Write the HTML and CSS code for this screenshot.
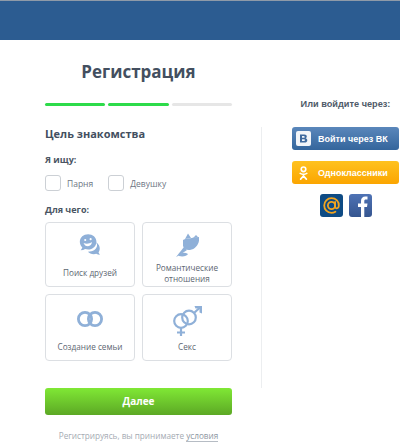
FILE: index.html
```html
<!DOCTYPE html>
<html lang="ru">
<head>
    <meta charset="UTF-8">
    <title>Регистрация</title>
    <link rel="stylesheet" href="styles.css">
</head>
<body>
    <div class="header"></div>
    <div class="content">
        <div class="main">
            <h1 class="title">Регистрация</h1>
            <div class="steps">
                <div class="step done"></div>
                <div class="step done"></div>
                <div class="step"></div>
            </div>
            <h2 class="subtitle">Цель знакомства</h2>
            <div class="label">Я ищу:</div>
            <div class="checks">
                <div class="check"><span class="box"></span>Парня</div>
                <div class="check"><span class="box"></span>Девушку</div>
            </div>
            <div class="label label-goal">Для чего:</div>
            <div class="cards">
                <div class="card">
                    <svg class="card-icon" width="22" height="24" viewBox="0 0 26.500 28">
                        <path fill="#8fb0d8" d="M19 10c3 1 6 4 6 8 0 2-.5 3.500-1.500 4.800.3 1.200 1 2.200 1.800 3-1.800 0-3.300-.4-4.500-1.300-1 .4-2 .6-3 .6-3 0-5.500-1.200-7-3 6 0 11-3 11-8 0-1.600-.9-3-2.800-4.100z"/>
                        <path fill="#8fb0d8" d="M11 1c5.500 0 10 3.800 10 9s-4.500 9.500-10 9.500c-1.300 0-2.500-.2-3.600-.6-1.500 1-3.300 1.500-5.400 1.500 1-1 1.700-2.200 2-3.600C2 15 1 12.700 1 10c0-5.200 4.500-9 10-9z"/>
                        <circle fill="#fff" cx="7.500" cy="8" r="1.300"/>
                        <circle fill="#fff" cx="14" cy="7" r="1.300"/>
                        <path fill="#fff" d="M5.500 11.500c3 1.500 7 1.200 10-1 0 3-2 5-4.700 5-2.500 0-4.500-1.700-5.300-4z"/>
                    </svg>
                    <div class="card-text">Поиск друзей</div>
                </div>
                <div class="card">
                    <svg class="card-icon" width="23" height="24" viewBox="0 0 23 24">
                        <path fill="#8fb0d8" d="M7 7C11 5 18 5 23 4 24 10 20 16 14 17 11 17.500 8 16 7 13z"/>
                        <path fill="#8fb0d8" d="M9 6l3-5.500L15 5zM17 5l3-3 2.500 2.500z"/>
                        <path fill="#8fb0d8" d="M8 14l3 3-8 5.500L0 24z"/>
                        <path fill="#8fb0d8" d="M3 22c2-2.500 6-3 9-1-1 2-5 3-9 2z"/>
                    </svg>
                    <div class="card-text card-text-two">Романтические отношения</div>
                </div>
                <div class="card card-rings">
                    <svg class="card-icon" width="26" height="16" viewBox="0 0 26 16">
                        <circle cx="8" cy="8" r="6.600" fill="none" stroke="#8fb0d8" stroke-width="2.800"/>
                        <circle cx="18" cy="8" r="6.600" fill="none" stroke="#8fb0d8" stroke-width="2.800"/>
                    </svg>
                    <div class="card-text">Создание семьи</div>
                </div>
                <div class="card card-sex">
                    <svg class="card-icon" width="30" height="31" viewBox="0 0 30 31">
                        <g fill="none" stroke="#8fb0d8" stroke-width="2.200">
                            <circle cx="9" cy="15" r="6.800"/>
                            <circle cx="17" cy="11.500" r="6.800"/>
                            <path d="M9 22v8M5 26.500h8M22 7l6-5.500"/>
                        </g>
                        <path fill="#8fb0d8" d="M22.500 0H30v7.500l-2.500-1V2.500h-4z"/>
                    </svg>
                    <div class="card-text">Секс</div>
                </div>
            </div>
            <div class="next">Далее</div>
            <div class="terms">Регистрируясь, вы принимаете <a class="terms-link">условия</a></div>
        </div>
        <div class="divider"></div>
        <div class="side">
            <div class="side-title">Или войдите через:</div>
            <div class="social vk">
                <svg class="social-icon vk-icon" width="15" height="15" viewBox="0 0 15 15">
                    <rect width="15" height="15" rx="2" fill="#f2f5f9"/>
                    <path fill="#3f6a9e" fill-rule="evenodd" d="M4 3.500h4.300c1.600 0 2.500.8 2.500 1.900 0 .9-.5 1.500-1.200 1.800 1 .2 1.700 1 1.700 2 0 1.400-1.100 2.300-2.800 2.300H4zM6 5v1.800h1.700c.6 0 1-.3 1-.9S8.300 5 7.700 5zM6 8.200V10h2c.6 0 1-.3 1-.9s-.4-.9-1-.9z"/>
                </svg>
                <span>Войти через ВК</span>
            </div>
            <div class="social ok">
                <svg class="social-icon ok-icon" width="9" height="14" viewBox="0 0 11 17">
                    <circle cx="5.500" cy="4" r="2.800" fill="none" stroke="#fff" stroke-width="2"/>
                    <path fill="none" stroke="#fff" stroke-width="2" stroke-linecap="round" d="M1.500 9c2.500 1.500 5.500 1.500 8 0M5.500 10.500v1.500M2 16l3.500-3.800L9 16"/>
                </svg>
                <span>Одноклассники</span>
            </div>
            <div class="small-icons">
                <div class="small-icon mail">
                    <svg width="23" height="23" viewBox="0 0 23 23">
                        <circle cx="11.500" cy="11.500" r="3.600" fill="none" stroke="#f0a420" stroke-width="1.800"/>
                        <path fill="none" stroke="#f0a420" stroke-width="1.800" stroke-linecap="round" d="M15.100 8v4.500c0 2.500 3.400 2.500 3.700-.5.500-4.500-3-7.800-7.300-7.800-4.100 0-7.300 3.200-7.300 7.300s3.200 7.300 7.300 7.300c1.500 0 2.800-.4 3.900-1.100"/>
                    </svg>
                </div>
                <div class="small-icon fb">
                    <svg width="23" height="23" viewBox="0 0 23 23">
                        <path fill="#fff" d="M12 23V13H9V9.500h3V7c0-3 1.800-4.500 4.300-4.500 1.100 0 2 .1 2.200.1v3h-1.600c-1.300 0-1.600.7-1.600 1.600v2.300h3.200l-.5 3.500h-2.700v10z"/>
                    </svg>
                </div>
            </div>
        </div>
    </div>
</body>
</html>
```

FILE: styles.css
```css
body {
    margin: 0;
    background-color: #fff;
    font-family: "Open Sans", sans-serif;
    color: #4a5563;
    overflow: hidden;
}
.header {
    height: 40px;
    box-sizing: border-box;
    border-top: 1px solid #8f9aa8;
    background-color: #2c5c91;
}
.content {
    display: flex;
    align-items: flex-start;
}
.main {
    width: 187px;
    margin-left: 45px;
}
.title {
    margin: 20px 0 0;
    font-size: 17px;
    line-height: 24px;
    text-align: center;
    color: #434f5f;
}
.steps {
    display: flex;
    gap: 3px;
    margin-top: 19px;
}
.step {
    flex: 1;
    height: 3px;
    border-radius: 2px;
    background-color: #e6e6e6;
}
.step.done {
    background-color: #2ddb4a;
}
.subtitle {
    margin: 19px 0 0;
    font-size: 11px;
    line-height: 18px;
    color: #434f5f;
}
.label {
    margin-top: 10px;
    font-size: 9px;
    font-weight: bold;
    line-height: 14px;
}
.label-goal {
    margin-top: 12px;
}
.checks {
    display: flex;
    gap: 15px;
    margin-top: 8px;
}
.check {
    display: flex;
    align-items: center;
    gap: 6px;
    font-size: 8.500px;
    color: #6d7683;
}
.box {
    width: 14px;
    height: 14px;
    border: 1px solid #ccd0d5;
    border-radius: 3px;
}
.cards {
    display: grid;
    grid-template-columns: 90px 90px;
    grid-template-rows: 65px 67px;
    gap: 7px;
    margin-top: 5px;
}
.card {
    display: flex;
    flex-direction: column;
    align-items: center;
    box-sizing: border-box;
    padding-top: 10px;
    border: 1px solid #dcdfe3;
    border-radius: 4px;
}
.card-rings {
    padding-top: 16px;
}
.card-sex {
    padding-top: 11px;
}
.card-icon {
    flex: none;
}
.card-text {
    margin-top: 10px;
    font-size: 8.200px;
    line-height: 11px;
    text-align: center;
    color: #5d6672;
}
.card-text-two {
    margin-top: 5px;
}
.card-rings .card-text {
    margin-top: 14px;
}
.card-sex .card-text {
    margin-top: 4px;
}
.next {
    height: 27px;
    margin-top: 27px;
    border-radius: 3px;
    background: linear-gradient(#80e835, #5ca825);
    color: #fff;
    font-size: 10px;
    font-weight: bold;
    line-height: 26px;
    text-align: center;
}
.terms {
    margin-top: 15px;
    font-size: 8.200px;
    line-height: 12px;
    text-align: center;
    white-space: nowrap;
    color: #a5abb3;
}
.terms-link {
    color: #8d96a2;
    border-bottom: 1px solid #b6bcc4;
}
.divider {
    width: 1px;
    height: 261px;
    margin-top: 87px;
    margin-left: 29px;
    background-color: #eceef0;
}
.side {
    width: 107px;
    margin-top: 58px;
    margin-left: 30px;
    font-family: "Liberation Sans", sans-serif;
    white-space: nowrap;
}
.side-title {
    font-size: 9.200px;
    font-weight: bold;
    line-height: 12px;
    text-align: center;
    color: #4f5a68;
}
.social {
    display: flex;
    align-items: center;
    height: 23px;
    border-radius: 3px;
    color: #fff;
    font-size: 9px;
    font-weight: bold;
}
.vk {
    margin-top: 17px;
    background: linear-gradient(#5a87bb, #34659c);
}
.ok {
    margin-top: 11px;
    background: linear-gradient(#ffc21f, #fba500);
}
.social-icon {
    flex: none;
}
.vk-icon {
    margin-left: 4px;
    margin-right: 7px;
}
.ok-icon {
    margin-left: 7px;
    margin-right: 10px;
}
.small-icons {
    display: flex;
    justify-content: center;
    gap: 6px;
    margin-top: 10px;
}
.small-icon {
    width: 23px;
    height: 23px;
    border-radius: 3px;
    overflow: hidden;
}
.mail {
    background-color: #0e4b84;
}
.fb {
    background: linear-gradient(#4f73b5, #35558f);
}
```
